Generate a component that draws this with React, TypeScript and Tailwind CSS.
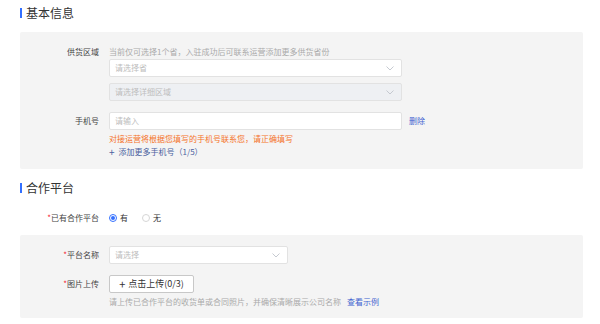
import type { ReactNode } from "react";

const FONT = "font-['Noto_Sans_CJK_SC','Noto_Sans',sans-serif]";

function Chevron() {
  return (
    <svg width="8" height="5" viewBox="0 0 8 5" fill="none" className="shrink-0">
      <path d="M0.5 0.5 L4 4 L7.5 0.5" stroke="#c0c4cc" strokeWidth="0.9" />
    </svg>
  );
}

function SectionTitle({ children }: { children: ReactNode }) {
  return (
    <div className="ml-[20px] flex h-[14px] items-center gap-[4px]">
      <span className="h-[10px] w-[2px] bg-[#3370ff]" />
      <span className="text-[12px] leading-[14px] text-[#333]">{children}</span>
    </div>
  );
}

function Label({ children, required }: { children: ReactNode; required?: boolean }) {
  return (
    <div className="w-[79px] shrink-0 pr-[0px] text-right text-[8px] leading-[12px] text-[#444]">
      {required && <span className="text-[#f5222d]">*</span>}
      {children}
    </div>
  );
}

function Select({
  placeholder,
  width,
  disabled,
}: {
  placeholder: string;
  width: string;
  disabled?: boolean;
}) {
  return (
    <div
      className={`flex h-[18px] items-center justify-between rounded-[2px] border border-[#e2e2e2] pl-[5px] pr-[7px] text-[8px] text-[#bdbdbd] ${width} ${
        disabled ? "bg-[#eef0f3]" : "bg-white"
      }`}
    >
      <span>{placeholder}</span>
      <Chevron />
    </div>
  );
}

export default function App() {
  return (
    <div className={`h-[324px] w-[600px] overflow-hidden bg-white pt-[6px] ${FONT}`}>
      <SectionTitle>基本信息</SectionTitle>

      <div className="ml-[20px] mt-[12px] w-[563px] rounded-[2px] bg-[#f4f4f4] pb-[11px] pt-[14px]">
        <div className="flex items-start gap-[10px]">
          <Label>供货区域</Label>
          <div className="flex flex-col">
            <div className="text-[8px] leading-[12px] text-[#aaa]">
              当前仅可选择1个省，入驻成功后可联系运营添加更多供货省份
            </div>
            <div className="mt-[1px]">
              <Select placeholder="请选择省" width="w-[293px]" />
            </div>
            <div className="mt-[6px]">
              <Select placeholder="请选择详细区域" width="w-[293px]" disabled />
            </div>
          </div>
        </div>

        <div className="mt-[11px] flex items-start gap-[10px]">
          <div className="flex h-[18px] items-center">
            <Label>手机号</Label>
          </div>
          <div className="flex flex-col">
            <div className="flex items-center gap-[7px]">
              <div className="flex h-[18px] w-[293px] items-center rounded-[2px] border border-[#e2e2e2] bg-white pl-[5px] text-[8px] text-[#bdbdbd]">
                请输入
              </div>
              <span className="text-[8px] text-[#3f63d0]">删除</span>
            </div>
            <div className="mt-[3px] text-[8px] leading-[12px] text-[#f5732a]">
              对接运营将根据您填写的手机号联系您，请正确填写
            </div>
            <div className="mt-[1px] flex items-center gap-[4px] text-[8px] leading-[12px] text-[#4a5f9e]">
              <span className="text-[10px] leading-[12px]">+</span>
              <span>添加更多手机号（1/5）</span>
            </div>
          </div>
        </div>
      </div>

      <div className="mt-[12px]">
        <SectionTitle>合作平台</SectionTitle>
      </div>

      <div className="mt-[17px] flex items-center gap-[10px] pl-[20px]">
        <Label required>已有合作平台</Label>
        <div className="flex items-center gap-[14px] text-[8px] text-[#333]">
          <div className="flex items-center gap-[3px]">
            <span className="flex h-[8px] w-[8px] items-center justify-center rounded-full border border-[#3370ff]">
              <span className="h-[4px] w-[4px] rounded-full bg-[#3370ff]" />
            </span>
            <span>有</span>
          </div>
          <div className="flex items-center gap-[3px]">
            <span className="h-[8px] w-[8px] rounded-full border border-[#d6d6d6] bg-white" />
            <span>无</span>
          </div>
        </div>
      </div>

      <div className="ml-[20px] mt-[11px] w-[563px] rounded-[2px] bg-[#f4f4f4] pb-[10px] pt-[11px]">
        <div className="flex items-center gap-[10px]">
          <Label required>平台名称</Label>
          <Select placeholder="请选择" width="w-[179px]" />
        </div>
        <div className="mt-[11px] flex items-start gap-[10px]">
          <div className="flex h-[18px] items-center">
            <Label required>图片上传</Label>
          </div>
          <div className="flex flex-col">
            <div className="flex h-[18px] w-[85px] items-center justify-center gap-[3px] rounded-[2px] border border-[#c8c8c8] bg-white text-[9px] text-[#333]">
              <span className="text-[11px] leading-[12px]">+</span>
              <span>点击上传(0/3)</span>
            </div>
            <div className="mt-[3px] flex items-center gap-[6px] text-[8px] leading-[12px]">
              <span className="text-[#aaa]">请上传已合作平台的收货单或合同照片，并确保清晰展示公司名称</span>
              <span className="text-[#3f63d0]">查看示例</span>
            </div>
          </div>
        </div>
      </div>
    </div>
  );
}
